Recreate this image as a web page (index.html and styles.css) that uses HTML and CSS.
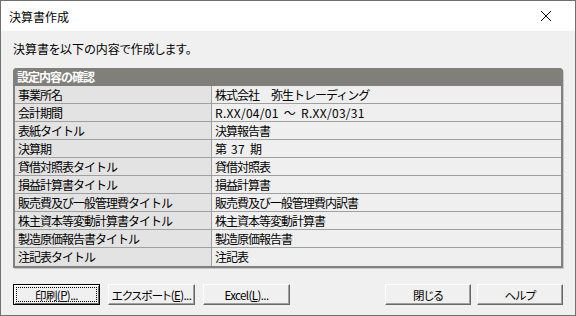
FILE: index.html
```html
<!DOCTYPE html>
<html lang="ja">
<head>
  <meta charset="UTF-8" />
  <title>決算書作成</title>
  <link rel="stylesheet" href="styles.css">
</head>
<body>
  <div class="window">
    <div class="titlebar">
      <span class="title">決算書作成</span>
      <svg class="close" width="12" height="12" viewBox="0 0 12 12">
        <path d="M1 1 L11 11 M11 1 L1 11" stroke="#000" stroke-width="1" fill="none"/>
      </svg>
    </div>
    <div class="content">
      <p class="lead">決算書を以下の内容で作成します。</p>

      <div class="panel">
        <div class="panel-head">設定内容の確認</div>
        <div class="rows">
          <div class="label">事業所名</div><div class="value">株式会社<span class="sp"></span>弥生トレーディング</div>
          <div class="label">会計期間</div><div class="value"><span class="num">R.XX/04/01 ～ R.XX/03/31</span></div>
          <div class="label">表紙タイトル</div><div class="value">決算報告書</div>
          <div class="label">決算期</div><div class="value">第<span class="num"> 37 </span>期</div>
          <div class="label">貸借対照表タイトル</div><div class="value">貸借対照表</div>
          <div class="label">損益計算書タイトル</div><div class="value">損益計算書</div>
          <div class="label">販売費及び一般管理費タイトル</div><div class="value">販売費及び一般管理費内訳書</div>
          <div class="label">株主資本等変動計算書タイトル</div><div class="value">株主資本等変動計算書</div>
          <div class="label">製造原価報告書タイトル</div><div class="value">製造原価報告書</div>
          <div class="label last">注記表タイトル</div><div class="value last">注記表</div>
        </div>
      </div>

      <div class="actions">
        <div class="group">
          <button class="default"><span class="focus">印刷(<u>P</u>)...</span></button>
          <button>エクスポート(<u>E</u>)...</button>
          <button>Excel(<u>L</u>)...</button>
        </div>
        <div class="group">
          <button>閉じる</button>
          <button>ヘルプ</button>
        </div>
      </div>
    </div>
  </div>
</body>
</html>
```

FILE: styles.css
```css
* {
  box-sizing: border-box;
}
body {
  margin: 0;
  font-family: "Noto Sans CJK JP", "Noto Sans", sans-serif;
  font-size: 12px;
  color: #000;
  background: #fff;
}
.window {
  width: 576px;
  height: 316px;
  border: 1px solid #707070;
  display: flex;
  flex-direction: column;
  background: #f0f0f0;
}
.titlebar {
  height: 30px;
  background: #fff;
  display: flex;
  align-items: center;
  justify-content: space-between;
  padding: 0 23px 0 8px;
}
.title {
  font-size: 12px;
}
.close {
  display: block;
}
.content {
  flex: 1;
  padding: 9px 12px 0 12px;
}
.lead {
  margin: 0;
  height: 18px;
  line-height: 18px;
  font-feature-settings: "palt";
}
.panel {
  margin-top: 10px;
  border: 2px solid #808080;
  border-top: none;
  border-radius: 4px 4px 0 0;
  box-shadow: 1px 1px 0 #c8c8c8;
}
.panel-head {
  height: 18px;
  line-height: 18px;
  background: #807f7a;
  color: #fff;
  font-weight: bold;
  padding-left: 4px;
  margin: 0 -2px;
  border-radius: 4px 4px 0 0;
  letter-spacing: -1px;
}
.rows {
  display: grid;
  grid-template-columns: 197px 1fr;
}
.label,
.value {
  height: 18px;
  line-height: 17px;
  border-bottom: 1px solid #a0a0a0;
  padding-left: 3px;
  letter-spacing: -1px;
  white-space: nowrap;
}
.label {
  background: #e3e3e3;
  border-right: 1px solid #a0a0a0;
}
.value {
  background: #efefef;
}
.num {
  letter-spacing: 0.3px;
  word-spacing: 2px;
}
.sp {
  display: inline-block;
  width: 12px;
}
.label.last,
.value.last {
  border-bottom: none;
}
.actions {
  margin-top: 16px;
  display: flex;
  justify-content: space-between;
}
.group {
  display: flex;
  gap: 8px;
}
.group:last-child {
  gap: 6px;
}
button {
  width: 87px;
  height: 21px;
  padding: 0;
  overflow: hidden;
  font-family: inherit;
  font-size: 11.5px;
  font-feature-settings: "palt";
  letter-spacing: -0.6px;
  white-space: nowrap;
  color: #000;
  background: #f0f0f0;
  border: 1px solid;
  border-color: #fff #696969 #696969 #fff;
  box-shadow: inset -1px -1px 0 #a0a0a0;
  display: flex;
  align-items: center;
  justify-content: center;
}
.group:last-child button {
  width: 86px;
}
button.default {
  border: 1px solid #000;
  box-shadow: inset 1px 1px 0 #fff, inset -1px -1px 0 #696969;
  padding: 2px;
}
.focus {
  flex: 1;
  align-self: stretch;
  display: flex;
  align-items: center;
  justify-content: center;
  border: 1px dotted #000;
}
u {
  text-underline-offset: 1px;
}
```
